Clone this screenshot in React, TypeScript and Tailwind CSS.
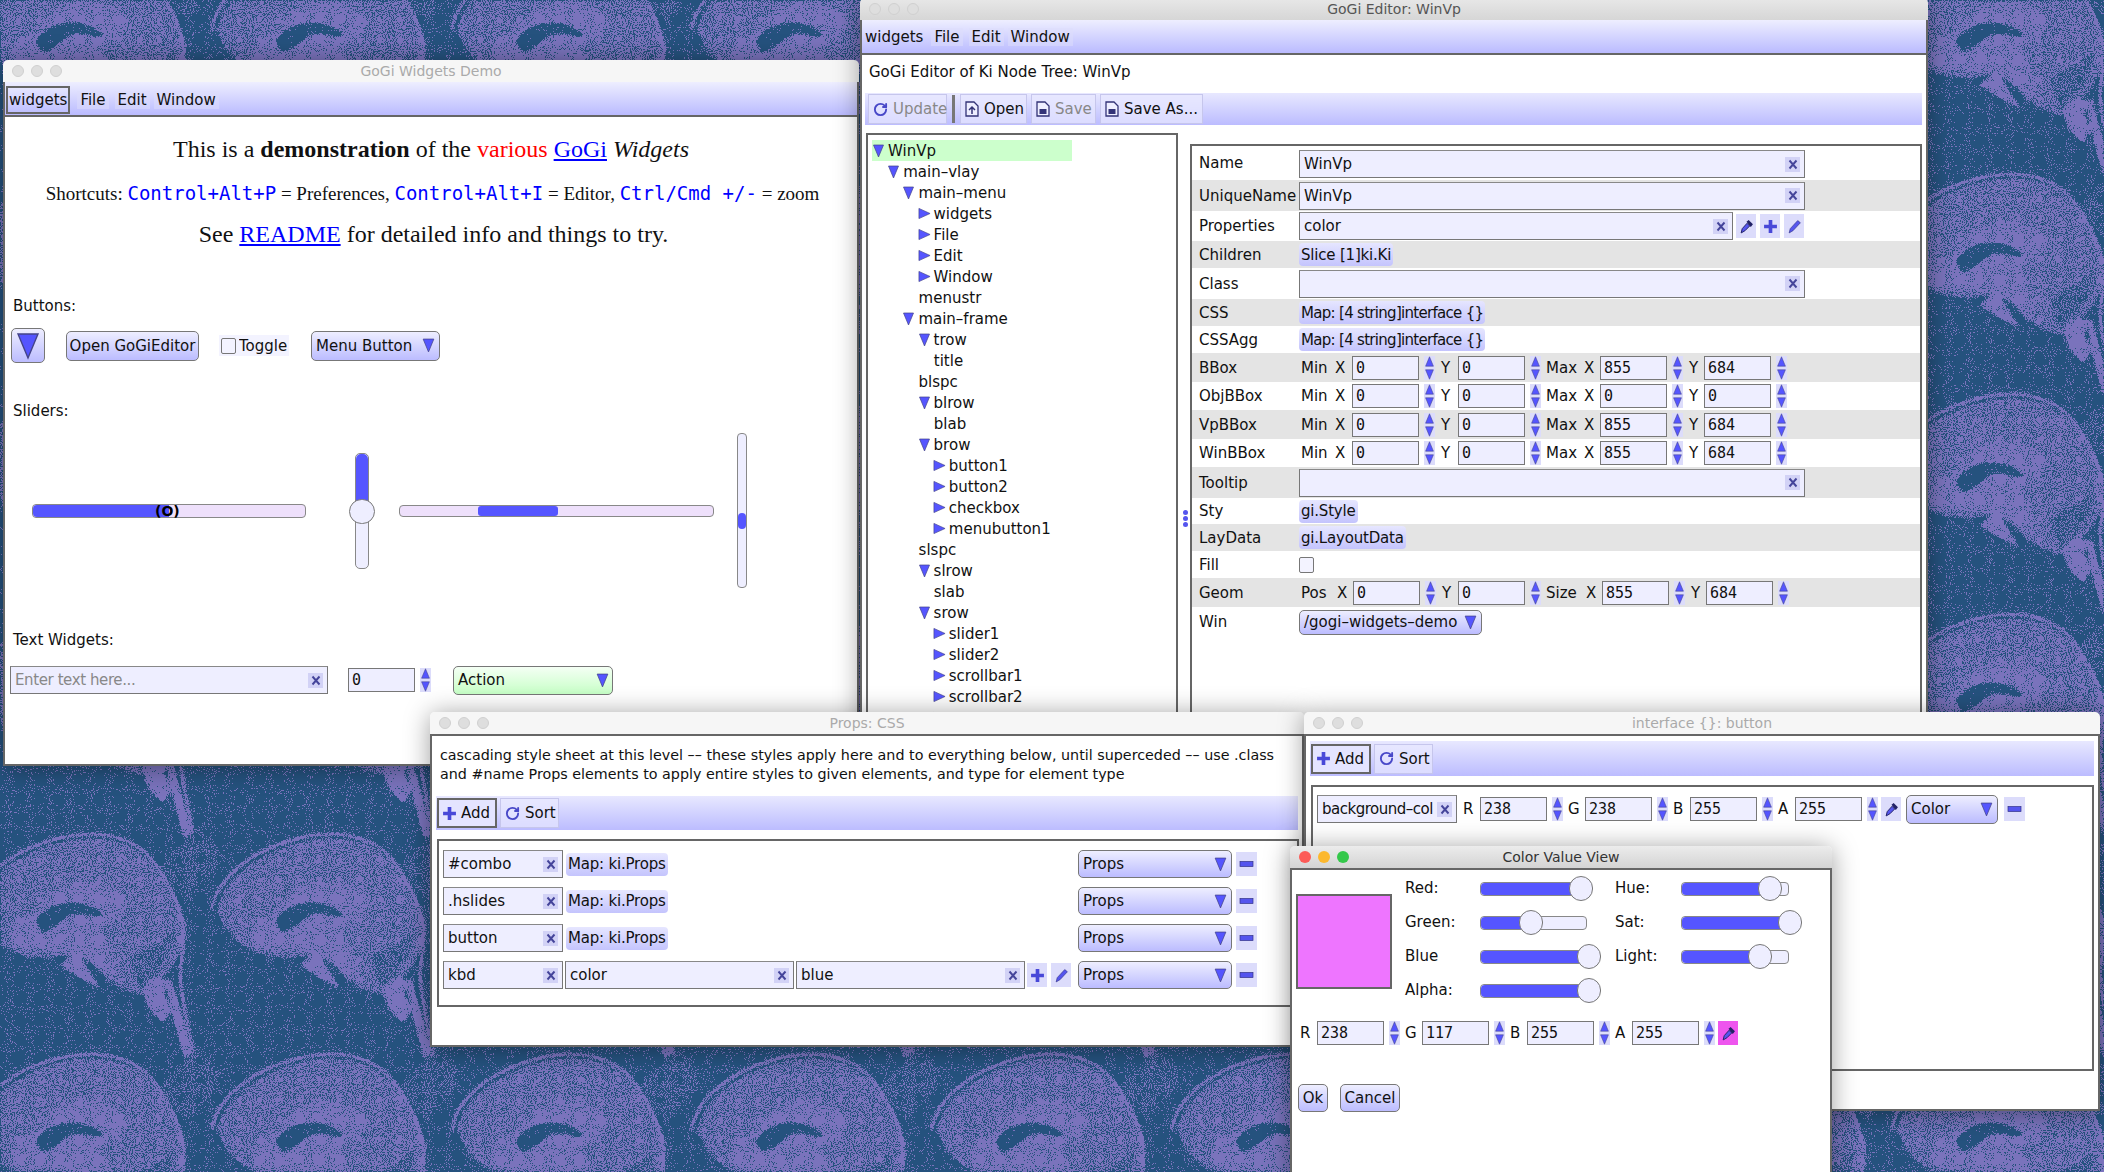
import type { ReactNode } from "react";
import { RotateCw } from "lucide-react";

const Tri = ({ dir = "down", className = "" }: { dir?: "down" | "up" | "right"; className?: string }) => {
  const pts = dir === "down" ? "1,1 11,1 6,13" : dir === "up" ? "6,1 11,13 1,13" : "1,1 13,6.5 1,12";
  return (
    <svg viewBox={dir === "right" ? "0 0 14 13" : "0 0 12 14"} className={`shrink-0 ${className}`}>
      <polygon points={pts} fill="#5555ff" stroke="#444488" strokeWidth="0.7" />
    </svg>
  );
};

const Spin = () => (
  <div className="ml-[5px] flex h-[24px] w-[11px] shrink-0 flex-col items-center justify-between bg-[#dcdcfb]">
    <Tri dir="up" className="h-[11px] w-[11px]" />
    <Tri className="h-[11px] w-[11px]" />
  </div>
);

const ClearX = () => (
  <span className="flex h-[15px] w-[15px] shrink-0 items-center justify-center bg-[#d2d2f6]">
    <svg viewBox="0 0 10 10" className="h-[11px] w-[10px]">
      <path d="M1.5 1 L8.5 9 M8.5 1 L1.5 9" stroke="#44449a" strokeWidth="1.9" />
    </svg>
  </span>
);

const Field = ({ className, text, textClass = "" }: { className: string; text?: string; textClass?: string }) => (
  <div
    className={`flex shrink-0 items-center justify-between border border-[#777] border-t-[#888] bg-[#eeeeff] pl-[4px] pr-[4px] ${className}`}
  >
    <span className={`whitespace-nowrap ${textClass}`}>{text}</span>
    <ClearX />
  </div>
);

const NumInput = ({ value, className = "" }: { value: string; className?: string }) => (
  <div
    className={`flex h-[24px] w-[67px] shrink-0 items-center border border-[#777] bg-[#eeeeff] pl-[3px] font-['DejaVu_Sans_Mono',monospace] text-[15px] ${className}`}
  >
    {value}
  </div>
);

const Num = ({ label, lw, value }: { label: string; lw: string; value: string }) => (
  <>
    <span className={`shrink-0 ${lw}`}>{label}</span>
    <NumInput value={value} />
    <Spin />
  </>
);

const Pill = ({ children, className = "tracking-[-0.2px]" }: { children: ReactNode; className?: string }) => (
  <span
    className={`flex h-[23px] shrink-0 items-center whitespace-nowrap rounded-[4px] bg-linear-to-b from-[#e6e6ff] to-[#c4c4fd] px-[2px] ${className}`}
  >
    {children}
  </span>
);

const Btn = ({ className = "", children }: { className?: string; children: ReactNode }) => (
  <div
    className={`flex shrink-0 items-center rounded-[5px] border border-[#777] bg-linear-to-b from-[#eeeeff] to-[#bcbcff] ${className}`}
  >
    {children}
  </div>
);

const Drop = ({ label, className }: { label: string; className: string }) => (
  <Btn className={`justify-between pl-[4px] pr-[4px] ${className}`}>
    <span className="whitespace-nowrap">{label}</span>
    <Tri className="h-[15px] w-[13px]" />
  </Btn>
);

const Tile = ({ className = "", tint, children }: { className?: string; tint?: string; children: ReactNode }) => (
  <span className={`flex h-[24px] w-[20px] shrink-0 items-center justify-center ${tint ?? "bg-[#dcdcfb]"} ${className}`}>
    {children}
  </span>
);

const PlusIcon = ({ className = "h-[15px] w-[15px]" }: { className?: string }) => (
  <svg viewBox="0 0 14 14" className={`shrink-0 ${className}`}>
    <path d="M7 1 V13 M1 7 H13" stroke="#4848d8" strokeWidth="3.4" />
  </svg>
);

const PencilIcon = () => (
  <svg viewBox="0 0 14 14" className="h-[15px] w-[15px]">
    <path d="M2 13 L3 9 L10 1.5 L12.5 3.5 L5.5 11 Z" fill="#5555ee" stroke="#333388" strokeWidth="0.6" />
  </svg>
);

const DropperIcon = () => (
  <svg viewBox="0 0 14 14" className="h-[15px] w-[15px]">
    <path d="M2 13 L3 9 L7.5 4 L10 6.5 L5.5 11 Z" fill="#5555ee" stroke="#222266" strokeWidth="0.9" />
    <path d="M7 2.5 L9 1 L13 5 L11 7.5 Z" fill="#222266" />
  </svg>
);

const MinusIcon = () => (
  <svg viewBox="0 0 14 6" className="h-[6px] w-[15px]">
    <rect x="0.5" y="0.5" width="13" height="5" fill="#5555ee" stroke="#333388" strokeWidth="0.7" />
  </svg>
);

const FileIcon = ({ kind }: { kind: "open" | "save" }) => (
  <svg viewBox="0 0 14 16" className="h-[16px] w-[14px] shrink-0">
    <path d="M1 1 H9 L13 5 V15 H1 Z" fill="#eeeeff" stroke="#333377" strokeWidth="1.3" />
    {kind === "open" ? (
      <path d="M7 13 V7 M4 9 L7 6 L10 9" stroke="#333377" fill="none" strokeWidth="1.5" />
    ) : (
      <rect x="3.5" y="8" width="7" height="5" fill="#333377" />
    )}
  </svg>
);

const Win = ({
  title,
  className,
  mode = "idle",
  menu,
  children,
}: {
  title: string;
  className: string;
  mode?: "idle" | "mid" | "active";
  menu?: boolean;
  children: ReactNode;
}) => (
  <div className={`absolute flex flex-col rounded-t-[5px] shadow-[0_2px_26px_rgba(0,0,0,0.38)] ${className}`}>
    <div
      className={`relative flex h-[22px] shrink-0 items-center justify-center rounded-t-[5px] text-[14px] ${
        mode === "idle"
          ? "bg-[#f6f6f6] text-[#aaaaaa]"
          : mode === "mid"
            ? "bg-linear-to-b from-[#e8e8e8] to-[#d6d6d6] text-[#555]"
            : "bg-linear-to-b from-[#ececec] to-[#d4d4d4] text-[#333]"
      }`}
    >
      <div className="absolute left-[9px] top-[5px] flex gap-[7px]">
        <span className={`h-[12px] w-[12px] rounded-full ${mode === "active" ? "bg-[#fc5b57]" : "border border-[#d0d0d0] bg-[#dedede]"}`} />
        <span className={`h-[12px] w-[12px] rounded-full ${mode === "active" ? "bg-[#fcb82e]" : "border border-[#d0d0d0] bg-[#dedede]"}`} />
        <span className={`h-[12px] w-[12px] rounded-full ${mode === "active" ? "bg-[#34c84a]" : "border border-[#d0d0d0] bg-[#dedede]"}`} />
      </div>
      {title}
    </div>
    <div
      className={`flex min-h-0 flex-1 flex-col overflow-hidden border-x-2 border-b-2 border-[#666] bg-white ${menu ? "" : "border-t-2"}`}
    >
      {children}
    </div>
  </div>
);

const Menu = ({ boxed }: { boxed?: boolean }) => (
  <div className={`flex h-[35px] shrink-0 items-center border-b-2 border-[#666] bg-linear-to-b from-[#eeeeff] to-[#bbbbff] ${boxed ? "pl-[1px] pt-[2px]" : "pl-[2px]"}`}>
    <span className={`flex h-[28px] items-center px-[1px] ${boxed ? "border-2 border-[#666]" : ""}`}>widgets</span>
    <span className="ml-[7px] bg-[#ddddfb]/50 px-[3px]">File</span>
    <span className="ml-[6px] bg-[#ddddfb]/50 px-[3px]">Edit</span>
    <span className="ml-[4px] bg-[#ddddfb]/50 px-[3px]">Window</span>
  </div>
);

const tree: [number, "open" | "closed" | "leaf", string][] = [
  [0, "open", "WinVp"],
  [1, "open", "main–vlay"],
  [2, "open", "main–menu"],
  [3, "closed", "widgets"],
  [3, "closed", "File"],
  [3, "closed", "Edit"],
  [3, "closed", "Window"],
  [3, "leaf", "menustr"],
  [2, "open", "main–frame"],
  [3, "open", "trow"],
  [4, "leaf", "title"],
  [3, "leaf", "blspc"],
  [3, "open", "blrow"],
  [4, "leaf", "blab"],
  [3, "open", "brow"],
  [4, "closed", "button1"],
  [4, "closed", "button2"],
  [4, "closed", "checkbox"],
  [4, "closed", "menubutton1"],
  [3, "leaf", "slspc"],
  [3, "open", "slrow"],
  [4, "leaf", "slab"],
  [3, "open", "srow"],
  [4, "closed", "slider1"],
  [4, "closed", "slider2"],
  [4, "closed", "scrollbar1"],
  [4, "closed", "scrollbar2"],
  [4, "closed", ""],
];

const Row = ({ h, gray, label, children }: { h: string; gray?: boolean; label: string; children?: ReactNode }) => (
  <div className={`flex shrink-0 items-center ${h} ${gray ? "bg-[#e4e4e4]" : ""}`}>
    <span className="w-[107px] shrink-0 pl-[7px]">{label}</span>
    {children}
  </div>
);

const BoxRow = ({ values }: { values: [string, string, string, string] }) => (
  <>
    <span className="ml-[2px] w-[34px] shrink-0">Min</span>
    <Num label="X" lw="w-[17px]" value={values[0]} />
    <span className="w-[6px] shrink-0" />
    <Num label="Y" lw="w-[17px]" value={values[1]} />
    <span className="ml-[5px] w-[38px] shrink-0">Max</span>
    <Num label="X" lw="w-[16px]" value={values[2]} />
    <span className="w-[6px] shrink-0" />
    <Num label="Y" lw="w-[15px]" value={values[3]} />
  </>
);

const Tool = ({ className = "", children }: { className?: string; children: ReactNode }) => (
  <div
    className={`flex h-[30px] shrink-0 items-center gap-[5px] whitespace-nowrap border border-[#c6c6ec] bg-[#e8e8ff]/70 pl-[4px] ${className}`}
  >
    {children}
  </div>
);

const AddSort = () => (
  <div className="flex h-full items-center gap-[3px] pl-[1px]">
    <div className="flex h-[30px] w-[60px] items-center gap-[4px] border-2 border-[#666] bg-[#e4e4ff] pl-[3px]">
      <PlusIcon />
      Add
    </div>
    <Tool className="w-[59px]">
      <RotateCw size={15} strokeWidth={3} color="#4848c8" className="shrink-0" />
      Sort
    </Tool>
  </div>
);

const PropsLine = ({ name }: { name: string }) => (
  <div className="ml-[4px] flex h-[28px] items-center">
    <Field className="h-[28px] w-[120px]" text={name} />
    <span className="ml-[3px]">
      <Pill>Map: ki.Props</Pill>
    </span>
    <span className="flex-1" />
    <Drop label="Props" className="h-[28px] w-[154px]" />
    <Tile className="ml-[4px] w-[21px]">
      <MinusIcon />
    </Tile>
    <span className="w-[40px] shrink-0" />
  </div>
);

const ColorSlider = ({ track, fill, knob }: { track: string; fill: string; knob: string }) => (
  <div className={`relative h-[14px] rounded-[4px] border border-[#888] bg-[#eeeeff] ${track}`}>
    <div className={`absolute inset-y-0 left-0 rounded-l-[4px] bg-[#5555ff] ${fill}`} />
    <div className={`absolute top-[-7px] h-[25px] w-[24px] rounded-full border border-[#777] bg-[#eeeeff] ${knob}`} />
  </div>
);

const Wallpaper = () => (
  <svg width="2104" height="1172" className="absolute left-0 top-0">
    <defs>
      <g id="brain">
        <path d="M150 0 L142 10 L150 30 L162 42 L172 30 L164 14 L168 0 Z" fill="#eee" />
        <path d="M150 220 L142 230 L150 250 L164 262 L172 250 L164 234 L168 220 Z" fill="#eee" />
        <path d="M160 105 L198 68 L226 98 L186 142 Z" fill="#5a5a5a" />
        <path
          d="M-23 150 C-20 125 10 95 60 82 C90 74 120 78 140 92 C165 112 178 140 184 170 C186 195 165 222 140 235 L115 226 C105 205 95 195 70 195 C30 205 -10 190 -23 150 Z"
          fill="#9c9c9c"
        />
        <path d="M130 198 C145 190 165 180 175 170 C170 200 155 218 140 232 Z" fill="#6a6a6a" />
        <path d="M40 150 C50 115 110 115 128 140 C130 155 105 160 100 170 C115 190 122 215 108 222 C92 195 70 190 25 190 C0 185 10 160 40 150 Z" fill="#d0d0d0" />
        <path d="M36 162 C46 140 85 136 103 155 C96 160 84 150 70 155 C60 160 55 170 42 172 Z" fill="#000" />
        <path d="M60 205 L76 190 L100 228 L80 218 Z" fill="#eee" />
        <path
          d="M-28 150 C-25 120 10 90 60 78 C95 70 125 75 145 92 C165 112 178 140 184 165 C185 185 180 205 180 215 C182 240 188 270 195 300"
          fill="none"
          stroke="#fff"
          strokeWidth="3"
        />
        <path d="M172 0 C180 30 188 55 192 74 L184 78 C178 55 170 30 166 0 Z" fill="#eee" />
      </g>
      <pattern id="tile" width="240" height="220" patternUnits="userSpaceOnUse" patternTransform="translate(0 100)">
        <rect width="240" height="220" fill="#222222" />
        <use href="#brain" x="-240" y="-220" />
        <use href="#brain" x="0" y="-220" />
        <use href="#brain" x="240" y="-220" />
        <use href="#brain" x="-240" y="0" />
        <use href="#brain" x="0" y="0" />
        <use href="#brain" x="240" y="0" />
      </pattern>
      <filter id="dither" x="0" y="0" width="100%" height="100%" colorInterpolationFilters="sRGB">
        <feGaussianBlur in="SourceGraphic" stdDeviation="0.8" result="soft" />
        <feTurbulence type="fractalNoise" baseFrequency="0.95" numOctaves="1" seed="4" />
        <feColorMatrix values="2.6 0 0 0 -0.8  2.6 0 0 0 -0.8  2.6 0 0 0 -0.8  0 0 0 0 1" result="noise" />
        <feComposite in="soft" in2="noise" operator="arithmetic" k1="0" k2="1" k3="1" k4="-0.5" />
        <feComponentTransfer>
          <feFuncR type="discrete" tableValues="0.149 0.482" />
          <feFuncG type="discrete" tableValues="0.322 0.451" />
          <feFuncB type="discrete" tableValues="0.498 0.741" />
        </feComponentTransfer>
      </filter>
    </defs>
    <rect width="2104" height="1172" fill="url(#tile)" filter="url(#dither)" />
  </svg>
);

export default function App() {
  return (
    <div className="relative h-[1172px] w-[2104px] overflow-hidden font-['DejaVu_Sans',sans-serif] text-[15px] leading-[18px] text-[#111]">
      <Wallpaper />

      {/* demo window */}
      <Win title="GoGi Widgets Demo" menu className="left-[3px] top-[60px] h-[706px] w-[856px]">
        <Menu boxed />
        <div className="mt-[17px] text-center font-['Liberation_Serif',serif] text-[24px] leading-[30px]">
          This is a <b>demonstration</b> of the <span className="text-[#ff0000]">various</span>{" "}
          <span className="text-[#0000ff] underline">GoGi</span> <i>Widgets</i>
        </div>
        <div className="mt-[17px] pl-[3px] text-center font-['Liberation_Serif',serif] text-[19px] leading-[24px]">
          Shortcuts: <span className="font-['DejaVu_Sans_Mono',monospace] text-[#0000ff]">Control+Alt+P</span> = Preferences,{" "}
          <span className="font-['DejaVu_Sans_Mono',monospace] text-[#0000ff]">Control+Alt+I</span> = Editor,{" "}
          <span className="font-['DejaVu_Sans_Mono',monospace] text-[#0000ff]">Ctrl/Cmd +/-</span> = zoom
        </div>
        <div className="mt-[13px] pl-[5px] text-center font-['Liberation_Serif',serif] text-[24px] leading-[30px]">
          See <span className="text-[#0000ff] underline">README</span> for detailed info and things to try.
        </div>

        <div className="ml-[8px] mt-[48px] h-[20px]">Buttons:</div>
        <div className="ml-[6px] mt-[11px] flex h-[35px] items-center">
          <Btn className="h-[35px] w-[34px] justify-center">
            <Tri className="h-[28px] w-[26px]" />
          </Btn>
          <Btn className="ml-[21px] h-[30px] w-[133px] justify-center">Open GoGiEditor</Btn>
          <div className="ml-[20px] flex h-[21px] w-[70px] items-center bg-[#f3f3ff] pl-[2px]">
            <span className="h-[16px] w-[15px] rounded-[2px] border border-[#777] bg-[#f3f3ff]" />
            <span className="ml-[3px] h-[19px] overflow-hidden pt-[1px]">Toggle</span>
          </div>
          <Drop label="Menu Button" className="ml-[22px] h-[30px] w-[129px]" />
        </div>

        <div className="ml-[8px] mt-[39px] h-[20px]">Sliders:</div>
        <div className="mt-[11px] flex h-[155px] items-center">
          <div className="relative ml-[27px] h-[14px] w-[274px] rounded-[4px] border border-[#888] bg-[#eee0fb]">
            <div className="absolute inset-y-0 left-0 w-[136px] rounded-l-[4px] bg-[#5555ff]" />
            <span className="absolute left-[122px] top-[-3px] text-[14px] font-bold leading-[18px] text-black">(O)</span>
          </div>
          <div className="relative ml-[49px] h-[116px] w-[14px] rounded-[5px] border border-[#888] bg-[#eeeeff]">
            <div className="absolute inset-x-0 top-0 h-[50px] rounded-t-[5px] bg-[#5555ff]" />
            <div className="absolute left-[-7px] top-[45px] h-[25px] w-[26px] rounded-full border border-[#777] bg-[#eeeeff]" />
          </div>
          <div className="relative ml-[30px] h-[12px] w-[315px] rounded-[4px] border border-[#888] bg-[#eee0fb]">
            <div className="absolute inset-y-0 left-[78px] w-[80px] rounded-[3px] bg-[#5555ff]" />
          </div>
          <div className="relative ml-[23px] h-[155px] w-[10px] rounded-[4px] border border-[#888] bg-[#eeeeff]">
            <div className="absolute inset-x-0 top-[79px] h-[16px] rounded-[4px] bg-[#5555ff]" />
          </div>
        </div>

        <div className="ml-[8px] mt-[43px] h-[20px]">Text Widgets:</div>
        <div className="ml-[5px] mt-[14px] flex h-[30px] items-center">
          <Field className="h-[28px] w-[318px]" text="Enter text here..." textClass="tracking-[-0.4px] text-[#888]" />
          <NumInput value="0" className="ml-[20px]" />
          <Spin />
          <Btn className="ml-[22px] h-[29px] w-[160px] justify-between from-[#f4fff4] to-[#c6ffc6] pl-[4px] pr-[3px]">
            <span>Action</span>
            <Tri className="h-[15px] w-[13px]" />
          </Btn>
        </div>
      </Win>

      {/* editor window */}
      <Win title="GoGi Editor: WinVp" mode="mid" menu className="left-[860px] top-[-2px] h-[770px] w-[1068px]">
        <Menu />
        <div className="ml-[7px] mt-[8px] h-[20px] text-[15px]">GoGi Editor of Ki Node Tree: WinVp</div>
        <div className="ml-[3px] mr-[4px] mt-[10px] flex h-[32px] shrink-0 items-center bg-linear-to-b from-[#e8e8ff] to-[#bcbcff] pl-[3px]">
          <Tool className="w-[79px] gap-[3px] text-[#888]">
            <RotateCw size={15} strokeWidth={3} color="#4848c8" className="shrink-0" />
            Update
          </Tool>
          <span className="ml-[5px] h-[28px] w-[3px] bg-[#777]" />
          <Tool className="ml-[5px] w-[67px]">
            <FileIcon kind="open" />
            Open
          </Tool>
          <Tool className="ml-[4px] w-[65px] text-[#888]">
            <FileIcon kind="save" />
            Save
          </Tool>
          <Tool className="ml-[4px] w-[103px]">
            <FileIcon kind="save" />
            Save As...
          </Tool>
        </div>
        <div className="mt-[8px] flex min-h-0 flex-1">
          <div className="ml-[4px] h-full w-[312px] overflow-hidden border-2 border-[#666] pl-[4px] pt-[5px]">
            {tree.map(([depth, state, label], i) => (
              <div
                key={i}
                className={`flex h-[21px] items-center ${i === 0 ? "w-[200px] bg-[#ccffcc]" : ""}`}
                style={{ paddingLeft: depth * 15.2 }}
              >
                {state === "open" && <Tri className="mr-[3px] h-[14px] w-[13px]" />}
                {state === "closed" && <Tri dir="right" className="mr-[3px] h-[13px] w-[13px]" />}
                <span className={state === "leaf" ? "ml-[1px]" : ""}>{label}</span>
              </div>
            ))}
          </div>
          <div className="relative ml-[12px] mr-[4px] mt-[11px] flex w-[732px] flex-col border-x-2 border-t-2 border-[#666]">
            <div className="absolute left-[-9px] top-[364px] flex flex-col">
              <span className="h-[5px] w-[5px] rounded-full bg-[#5555ee]" />
              <span className="mt-[1px] h-[5px] w-[5px] rounded-full bg-[#5555ee]" />
              <span className="mt-[1px] h-[5px] w-[5px] rounded-full bg-[#5555ee]" />
            </div>
            <Row h="h-[34px]" label="Name">
              <Field className="mt-[2px] h-[28px] w-[506px]" text="WinVp" />
            </Row>
            <Row h="h-[31px]" gray label="UniqueName">
              <Field className="h-[28px] w-[506px]" text="WinVp" />
            </Row>
            <Row h="h-[30px]" label="Properties">
              <Field className="h-[28px] w-[434px]" text="color" />
              <Tile className="ml-[3px]"><DropperIcon /></Tile>
              <Tile className="ml-[4px]"><PlusIcon /></Tile>
              <Tile className="ml-[4px]"><PencilIcon /></Tile>
            </Row>
            <Row h="h-[27px]" gray label="Children">
              <Pill>Slice [1]ki.Ki</Pill>
            </Row>
            <Row h="h-[31px]" label="Class">
              <Field className="h-[28px] w-[506px]" />
            </Row>
            <Row h="h-[27px]" gray label="CSS">
              <Pill className="tracking-[-0.7px]">Map: [4 string]interface {"{}"}</Pill>
            </Row>
            <Row h="h-[27px]" label="CSSAgg">
              <Pill className="tracking-[-0.7px]">Map: [4 string]interface {"{}"}</Pill>
            </Row>
            <Row h="h-[29px]" gray label="BBox">
              <BoxRow values={["0", "0", "855", "684"]} />
            </Row>
            <Row h="h-[28px]" label="ObjBBox">
              <BoxRow values={["0", "0", "0", "0"]} />
            </Row>
            <Row h="h-[29px]" gray label="VpBBox">
              <BoxRow values={["0", "0", "855", "684"]} />
            </Row>
            <Row h="h-[28px]" label="WinBBox">
              <BoxRow values={["0", "0", "855", "684"]} />
            </Row>
            <Row h="h-[31px]" gray label="Tooltip">
              <Field className="h-[28px] w-[506px]" />
            </Row>
            <Row h="h-[26px]" label="Sty">
              <Pill>gi.Style</Pill>
            </Row>
            <Row h="h-[27px]" gray label="LayData">
              <Pill>gi.LayoutData</Pill>
            </Row>
            <Row h="h-[27px]" label="Fill">
              <span className="h-[16px] w-[15px] rounded-[2px] border border-[#777] bg-[#f3f3ff]" />
            </Row>
            <Row h="h-[29px]" gray label="Geom">
              <span className="ml-[2px] w-[36px] shrink-0">Pos</span>
              <Num label="X" lw="w-[16px]" value="0" />
              <span className="w-[6px] shrink-0" />
              <Num label="Y" lw="w-[16px]" value="0" />
              <span className="ml-[5px] w-[40px] shrink-0">Size</span>
              <Num label="X" lw="w-[16px]" value="855" />
              <span className="w-[6px] shrink-0" />
              <Num label="Y" lw="w-[15px]" value="684" />
            </Row>
            <Row h="h-[30px]" label="Win">
              <Drop label="/gogi–widgets–demo" className="h-[25px] w-[183px]" />
            </Row>
          </div>
        </div>
      </Win>

      {/* css props window */}
      <Win title="Props: CSS" className="left-[430px] top-[712px] h-[335px] w-[874px]">
        <div className="mt-[10px] pl-[8px] text-[14.3px] leading-[19px]">
          cascading style sheet at this level –– these styles apply here and to everything below, until superceded –– use .class
          <br />
          and #name Props elements to apply entire styles to given elements, and type for element type
        </div>
        <div className="ml-[4px] mr-[4px] mt-[12px] h-[34px] shrink-0 bg-linear-to-b from-[#e8e8ff] to-[#bcbcff]">
          <AddSort />
        </div>
        <div className="ml-[5px] mt-[9px] flex h-[168px] w-[862px] flex-col gap-[9px] border-2 border-[#666] pt-[9px]">
          <PropsLine name="#combo" />
          <PropsLine name=".hslides" />
          <PropsLine name="button" />
          <div className="ml-[4px] flex h-[28px] items-center">
            <Field className="h-[28px] w-[120px]" text="kbd" />
            <Field className="ml-[2px] h-[28px] w-[229px]" text="color" />
            <Field className="ml-[2px] h-[28px] w-[229px]" text="blue" />
            <Tile className="ml-[2px]"><PlusIcon /></Tile>
            <Tile className="ml-[4px]"><PencilIcon /></Tile>
            <span className="flex-1" />
            <Drop label="Props" className="h-[28px] w-[154px]" />
            <Tile className="ml-[4px] w-[21px]"><MinusIcon /></Tile>
            <span className="w-[40px] shrink-0" />
          </div>
        </div>
      </Win>

      {/* interface window */}
      <Win title="interface {}: button" className="left-[1304px] top-[712px] h-[399px] w-[796px]">
        <div className="ml-[4px] mr-[4px] mt-[5px] h-[35px] shrink-0 bg-linear-to-b from-[#e8e8ff] to-[#bcbcff]">
          <AddSort />
        </div>
        <div className="ml-[5px] mr-[4px] mt-[9px] h-[286px] border-2 border-[#666] pl-[4px] pt-[8px]">
          <div className="flex h-[28px] items-center">
            <Field className="h-[28px] w-[140px]" text="background–col" textClass="tracking-[-0.5px]" />
            <span className="w-[6px] shrink-0" />
            <Num label="R" lw="w-[17px]" value="238" />
            <span className="w-[5px] shrink-0" />
            <Num label="G" lw="w-[17px]" value="238" />
            <span className="w-[5px] shrink-0" />
            <Num label="B" lw="w-[17px]" value="255" />
            <span className="w-[5px] shrink-0" />
            <Num label="A" lw="w-[17px]" value="255" />
            <Tile className="ml-[3px]"><DropperIcon /></Tile>
            <Drop label="Color" className="ml-[5px] h-[29px] w-[92px]" />
            <Tile className="ml-[6px] w-[21px]"><MinusIcon /></Tile>
          </div>
        </div>
      </Win>

      {/* color dialog */}
      <Win title="Color Value View" mode="active" className="left-[1290px] top-[846px] h-[340px] w-[542px]">
        <div className="flex pl-[4px] pt-[2px]">
          <div className="mt-[22px] h-[95px] w-[96px] border-2 border-[#666] bg-[#ee75ff]" />
          <div className="ml-[13px] grid grid-cols-[75px_135px]">
            <span className="flex h-[34px] items-center pb-[2px]">Red:</span>
            <div className="flex h-[34px] items-center"><ColorSlider track="w-[105px]" fill="w-[90px]" knob="left-[88px]" /></div>
            <span className="flex h-[34px] items-center pb-[2px]">Green:</span>
            <div className="flex h-[34px] items-center"><ColorSlider track="w-[107px]" fill="w-[40px]" knob="left-[38px]" /></div>
            <span className="flex h-[34px] items-center pb-[2px]">Blue</span>
            <div className="flex h-[34px] items-center"><ColorSlider track="w-[107px]" fill="w-[100px]" knob="left-[96px]" /></div>
            <span className="flex h-[34px] items-center pb-[2px]">Alpha:</span>
            <div className="flex h-[34px] items-center"><ColorSlider track="w-[107px]" fill="w-[100px]" knob="left-[96px]" /></div>
          </div>
          <div className="grid grid-cols-[66px_125px] content-start">
            <span className="flex h-[34px] items-center pb-[2px]">Hue:</span>
            <div className="flex h-[34px] items-center"><ColorSlider track="w-[108px]" fill="w-[80px]" knob="left-[76px]" /></div>
            <span className="flex h-[34px] items-center pb-[2px]">Sat:</span>
            <div className="flex h-[34px] items-center"><ColorSlider track="w-[108px]" fill="w-[100px]" knob="left-[96px]" /></div>
            <span className="flex h-[34px] items-center pb-[2px]">Light:</span>
            <div className="flex h-[34px] items-center"><ColorSlider track="w-[108px]" fill="w-[70px]" knob="left-[66px]" /></div>
          </div>
        </div>
        <div className="ml-[8px] mt-[12px] flex h-[26px] items-center">
          <Num label="R" lw="w-[17px]" value="238" />
          <span className="w-[5px] shrink-0" />
          <Num label="G" lw="w-[17px]" value="117" />
          <span className="w-[5px] shrink-0" />
          <Num label="B" lw="w-[17px]" value="255" />
          <span className="w-[5px] shrink-0" />
          <Num label="A" lw="w-[17px]" value="255" />
          <Tile className="ml-[3px]" tint="bg-[#ee55ee]"><DropperIcon /></Tile>
        </div>
        <div className="ml-[6px] mt-[38px] flex gap-[12px]">
          <Btn className="h-[28px] w-[30px] justify-center">Ok</Btn>
          <Btn className="h-[28px] w-[60px] justify-center">Cancel</Btn>
        </div>
      </Win>
    </div>
  );
}
